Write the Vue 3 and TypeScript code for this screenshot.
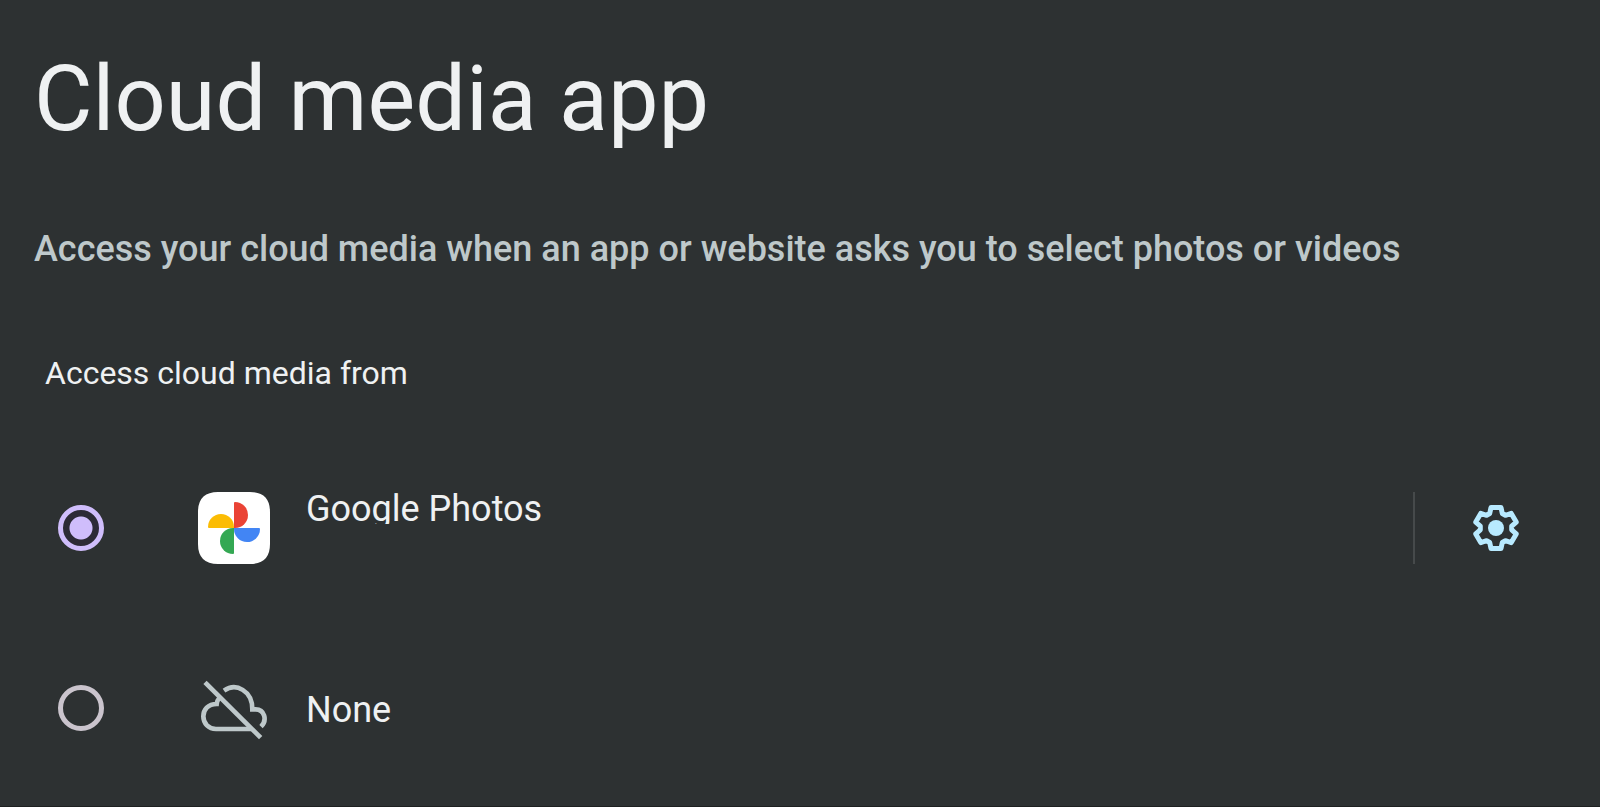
<script setup lang="ts">
import { ref } from 'vue'

type Provider = 'photos' | 'none'

const selected = ref<Provider>('photos')
</script>

<template>
  <main class="page">
    <h1 class="title">Cloud media app</h1>
    <p class="intro">Access your cloud media when an app or website asks you to select photos or videos</p>

    <fieldset class="group">
      <legend class="heading">Access cloud media from</legend>

      <div class="row">
        <label class="choice" for="provider-photos">
          <input id="provider-photos" v-model="selected" class="radio" type="radio" name="provider" value="photos" />
          <svg class="icon" viewBox="0 0 72 72" aria-hidden="true">
            <path fill="#fff" d="M20 0H52Q72 0 72 20V52Q72 72 52 72H20Q0 72 0 52V20Q0 0 20 0Z" />
            <path fill="#ea4335" d="M36 36V11Q36 10 37 10A13 13 0 0 1 37 36Z" />
            <path fill="#4285f4" d="M36 36H61Q62 36 62 37A13 13 0 0 1 36 37Z" />
            <path fill="#34a853" d="M36 36V61Q36 62 35 62A13 13 0 0 1 35 36Z" />
            <path fill="#fbbc04" d="M36 36H11Q10 36 10 35A13 13 0 0 1 36 35Z" />
          </svg>
          <span class="name clipped">Google Photos</span>
        </label>
        <button class="settings" type="button" aria-label="Google Photos settings">
          <svg class="gear" viewBox="-24 -24 48 48" aria-hidden="true">
            <path
              fill="none"
              stroke="#b8eaff"
              stroke-width="5"
              stroke-linejoin="round"
              d="M-5-20.500H5L6.300-14.500 9.400-12.700 15.250-14.600 20.250-5.900 15.700-1.800V1.800L20.250 5.900 15.250 14.600 9.400 12.700 6.300 14.500 5 20.500H-5L-6.300 14.500-9.400 12.700-15.250 14.600-20.250 5.900-15.700 1.800V-1.800L-20.250-5.900-15.250-14.600-9.400-12.700-6.300-14.500Z"
            />
            <circle r="8" fill="#b8eaff" />
          </svg>
        </button>
      </div>

      <div class="row">
        <label class="choice" for="provider-none">
          <input id="provider-none" v-model="selected" class="radio" type="radio" name="provider" value="none" />
          <svg class="icon" viewBox="24 6 216 216" fill="none" stroke="#bec8ca" stroke-width="14" aria-hidden="true">
            <path d="M45 37 212 203" />
            <path d="M102 62C138 37 187 62 187 118H197C223 118 233 150 213 170" />
            <path d="M88 84Q81 92 80 102C54 102 40 119 40 139C40 161 56 177 78 177H184" />
          </svg>
          <span class="name">None</span>
        </label>
      </div>
    </fieldset>
  </main>
</template>

<style>
body {
  margin: 0;
  background: #2d3132;
}
</style>

<style scoped>
.page {
  box-sizing: border-box;
  min-height: 100vh;
  padding: 48px 34px 8px;
  border-bottom: 1px solid #1e2021;
  background: #2d3132;
  color: #eff1f2;
  font-family: Roboto, "Liberation Sans", sans-serif;
}

.title {
  margin: 0 0 73px;
  font-size: 90px;
  font-weight: 400;
  line-height: 104px;
}

.intro {
  margin: 0 0 80px;
  color: #bec8ca;
  font-size: 36px;
  font-weight: 500;
  line-height: 48px;
}

.group {
  min-width: 0;
  margin: 0;
  padding: 0;
  border: 0;
}

.heading {
  margin: 0 0 45px;
  padding: 0 0 0 11px;
  font-size: 32px;
  line-height: 40px;
}

.row {
  display: flex;
  align-items: center;
  min-height: 180px;
}

.choice {
  display: flex;
  flex: 1;
  align-items: center;
  padding-left: 24px;
  cursor: pointer;
}

.radio {
  box-sizing: border-box;
  flex: none;
  width: 46px;
  height: 46px;
  margin: 0 94px 0 0;
  border: 5px solid #cac4cd;
  border-radius: 50%;
  appearance: none;
  cursor: pointer;
}

.radio:checked {
  border-color: #cfbdfb;
  background: radial-gradient(circle, #cfbdfb 11px, #2c2a36 12px);
}

.icon {
  flex: none;
  width: 72px;
  height: 72px;
  margin-right: 36px;
}

.name {
  padding-top: 4px;
  font-size: 36px;
  line-height: 48px;
}

.clipped {
  align-self: flex-start;
  height: 32px;
  padding-top: 0;
  overflow: hidden;
  line-height: 34px;
}

.settings {
  display: flex;
  align-items: center;
  justify-content: center;
  width: 153px;
  height: 72px;
  padding: 0 0 0 10px;
  border: 0;
  border-left: 2px solid #464a4b;
  background: none;
  cursor: pointer;
}

.gear {
  width: 48px;
  height: 48px;
}
</style>
